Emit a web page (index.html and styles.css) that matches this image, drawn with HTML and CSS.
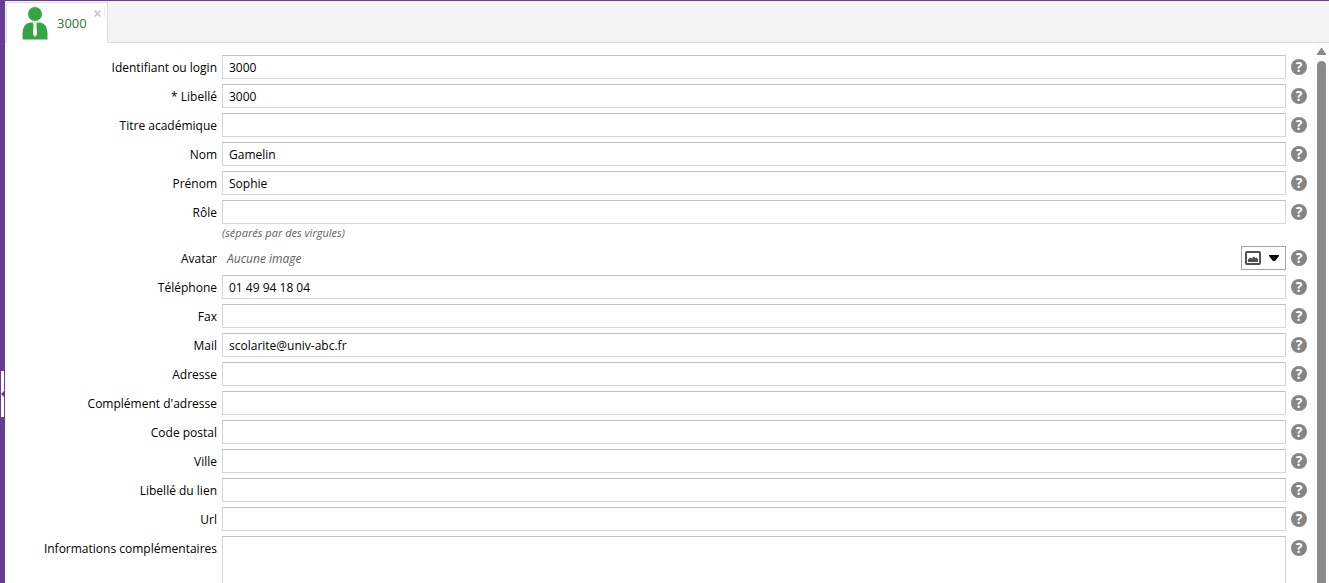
FILE: index.html
```html
<!DOCTYPE html>
<html lang="fr">
<head>
  <meta charset="UTF-8" />
  <meta name="viewport" content="width=device-width, initial-scale=1" />
  <title>3000</title>
  <link rel="stylesheet" href="styles.css">
</head>
<body>
  <div class="app">
    <div class="splitter">
      <button class="splitter-toggle" type="button" aria-label="Ouvrir le panneau">
        <svg width="3" height="6" viewBox="0 0 3 6"><path d="M3 0v6L0 3z" fill="#693c94"/></svg>
      </button>
    </div>

    <main class="panel">
      <!-- Onglets -->
      <nav class="tabs">
        <div class="tab">
          <a class="tab-link" href="#fiche">
            <svg class="tab-icon" width="26" height="34" viewBox="0 0 26 34">
              <circle cx="13" cy="7" r="7" fill="#35a544"/>
              <path d="M0.500 32.500V26C1 19 4 15.500 9 15.500H17C22 15.500 25 19 25.500 26V32.500Z" fill="#35a544"/>
              <path d="M11 15.500h4l-.5 2.500.5 9.500-2 2.500-2-2.500.5-9.500z" fill="#fff"/>
            </svg>
            <span>3000</span>
          </a>
          <button class="tab-close" type="button" aria-label="Fermer">
            <svg width="7" height="7" viewBox="0 0 7 7"><path d="M.7.7l5.600 5.600M6.300.7L.7 6.300" stroke="#c8c8c8" stroke-width="1.700"/></svg>
          </button>
        </div>
      </nav>

      <div class="content">
        <form class="form" id="fiche">
          <div class="row">
            <label for="login">Identifiant ou login</label>
            <input type="text" id="login" value="3000">
            <button class="help" type="button">?</button>
          </div>
          <div class="row">
            <label for="libelle">* Libellé</label>
            <input type="text" id="libelle" value="3000">
            <button class="help" type="button">?</button>
          </div>
          <div class="row">
            <label for="titre">Titre académique</label>
            <input type="text" id="titre">
            <button class="help" type="button">?</button>
          </div>
          <div class="row">
            <label for="nom">Nom</label>
            <input type="text" id="nom" value="Gamelin">
            <button class="help" type="button">?</button>
          </div>
          <div class="row">
            <label for="prenom">Prénom</label>
            <input type="text" id="prenom" value="Sophie">
            <button class="help" type="button">?</button>
          </div>
          <div class="row">
            <label for="role">Rôle</label>
            <input type="text" id="role">
            <button class="help" type="button">?</button>
            <p class="hint">(séparés par des virgules)</p>
          </div>
          <div class="row">
            <label for="avatar">Avatar</label>
            <div class="avatar">
              <span class="avatar-empty">Aucune image</span>
              <button class="avatar-menu" id="avatar" type="button" aria-label="Choisir une image">
                <svg width="16" height="14" viewBox="0 0 16 14">
                  <rect x="1" y="1" width="14" height="12" rx="1" fill="#fff" stroke="#505050" stroke-width="2"/>
                  <path d="M3 11V8.500L5 6.500l1.500 1L9 5.500l1.500 1.500L12 6.500l1 2V11z" fill="#505050"/>
                </svg>
                <svg width="10" height="6" viewBox="0 0 10 6"><path d="M0 0h10v1L6 6H4L0 1z" fill="#000"/></svg>
              </button>
            </div>
            <button class="help" type="button">?</button>
          </div>
          <div class="row">
            <label for="telephone">Téléphone</label>
            <input type="text" id="telephone" value="01 49 94 18 04">
            <button class="help" type="button">?</button>
          </div>
          <div class="row">
            <label for="fax">Fax</label>
            <input type="text" id="fax">
            <button class="help" type="button">?</button>
          </div>
          <div class="row">
            <label for="mail">Mail</label>
            <input type="text" id="mail" value="scolarite@univ-abc.fr">
            <button class="help" type="button">?</button>
          </div>
          <div class="row">
            <label for="adresse">Adresse</label>
            <input type="text" id="adresse">
            <button class="help" type="button">?</button>
          </div>
          <div class="row">
            <label for="complement">Complément d'adresse</label>
            <input type="text" id="complement">
            <button class="help" type="button">?</button>
          </div>
          <div class="row">
            <label for="cp">Code postal</label>
            <input type="text" id="cp">
            <button class="help" type="button">?</button>
          </div>
          <div class="row">
            <label for="ville">Ville</label>
            <input type="text" id="ville">
            <button class="help" type="button">?</button>
          </div>
          <div class="row">
            <label for="lien">Libellé du lien</label>
            <input type="text" id="lien">
            <button class="help" type="button">?</button>
          </div>
          <div class="row">
            <label for="url">Url</label>
            <input type="text" id="url">
            <button class="help" type="button">?</button>
          </div>
          <div class="row">
            <label for="infos">Informations complémentaires</label>
            <textarea id="infos" rows="6"></textarea>
            <button class="help" type="button">?</button>
          </div>
        </form>

        <!-- Barre de défilement -->
        <div class="scrollbar">
          <svg width="9" height="7" viewBox="0 0 9 7"><path d="M4 0h1l4 6v1H0V6z" fill="#8a8a8a"/></svg>
          <div class="scrollbar-thumb"></div>
        </div>
      </div>
    </main>
  </div>
</body>
</html>
```
FILE: styles.css
```css
* {
  box-sizing: border-box;
}

body {
  margin: 0;
  font-family: "Open Sans", sans-serif;
  font-size: 12px;
  color: #000;
  background: #fff;
}

button {
  padding: 0;
  border: none;
  background: none;
  font-family: inherit;
  cursor: pointer;
}

svg {
  display: block;
}

.app {
  display: flex;
  height: 100vh;
  border-top: 1px solid #693c94;
  overflow: hidden;
}

/* Poignée du panneau gauche */
.splitter {
  display: flex;
  flex: none;
  align-items: center;
  width: 5px;
  padding-top: 203px;
  background: #693c94;
}

.splitter-toggle {
  display: flex;
  align-items: center;
  justify-content: flex-end;
  width: 4px;
  height: 46px;
  border-left: 1px solid #693c94;
  background: #fff;
}

.panel {
  display: flex;
  flex: 1;
  flex-direction: column;
  min-width: 0;
}

/* Onglets */
.tabs {
  display: flex;
  flex: none;
  height: 42px;
  padding: 1px 0 0 1px;
  border-bottom: 1px solid #d8d8d8;
  background: #f4f4f4;
}

.tab {
  display: flex;
  justify-content: space-between;
  width: 102px;
  height: 41px;
  padding: 4px 2px 0 15px;
  border: 1px solid #dcdcdc;
  border-bottom: none;
  background: #fff;
}

.tab-link {
  display: flex;
  align-items: flex-start;
  gap: 9px;
  color: #2c7a35;
  font-size: 13px;
  line-height: 32px;
  text-decoration: none;
}

.tab-close {
  align-self: flex-start;
  padding: 3px 3px 0 0;
  border-right: 1px solid #ececec;
}

.content {
  display: flex;
  flex: 1;
  min-height: 0;
}

/* Formulaire */
.form {
  flex: 1;
  min-width: 0;
  padding: 12px 7px 0 0;
  overflow: hidden;
}

.row {
  display: grid;
  grid-template-columns: 212px 1fr 16px;
  column-gap: 5px;
  align-items: start;
  margin-bottom: 4px;
}

.row label {
  padding-top: 1px;
  line-height: 24px;
  text-align: right;
}

.row input,
.row textarea {
  display: block;
  width: 100%;
  margin: 0;
  padding: 0 6px;
  border: 1px solid #d5d5d5;
  border-top-color: #c0c0c0;
  border-radius: 0;
  background: #fff;
  color: #000;
  font-family: inherit;
  font-size: 12px;
  resize: none;
}

.row input {
  height: 24px;
}

.hint {
  grid-column: 2;
  margin: 0;
  padding-bottom: 2px;
  color: #606060;
  font-size: 11px;
  font-style: italic;
  line-height: 15px;
}

.avatar {
  display: flex;
  align-items: center;
  justify-content: space-between;
  height: 24px;
  padding-left: 5px;
}

.avatar-empty {
  color: #606060;
  font-style: italic;
}

.avatar-menu {
  display: flex;
  align-items: center;
  gap: 8px;
  width: 45px;
  height: 24px;
  padding-left: 3px;
  border: 1px solid #a6a6a6;
  background: #fff;
}

.help {
  width: 16px;
  height: 16px;
  margin-top: 4px;
  border-radius: 50%;
  background: #858585;
  color: #fff;
  font-size: 14px;
  font-weight: 700;
  line-height: 16px;
  text-align: center;
}

/* Barre de défilement */
.scrollbar {
  display: flex;
  flex: none;
  flex-direction: column;
  align-items: center;
  gap: 6px;
  width: 15px;
  padding-top: 5px;
  background: #fcfcfc;
}

.scrollbar-thumb {
  flex: 1;
  width: 9px;
  border-radius: 5px 5px 0 0;
  background: #8a8a8a;
}
```
